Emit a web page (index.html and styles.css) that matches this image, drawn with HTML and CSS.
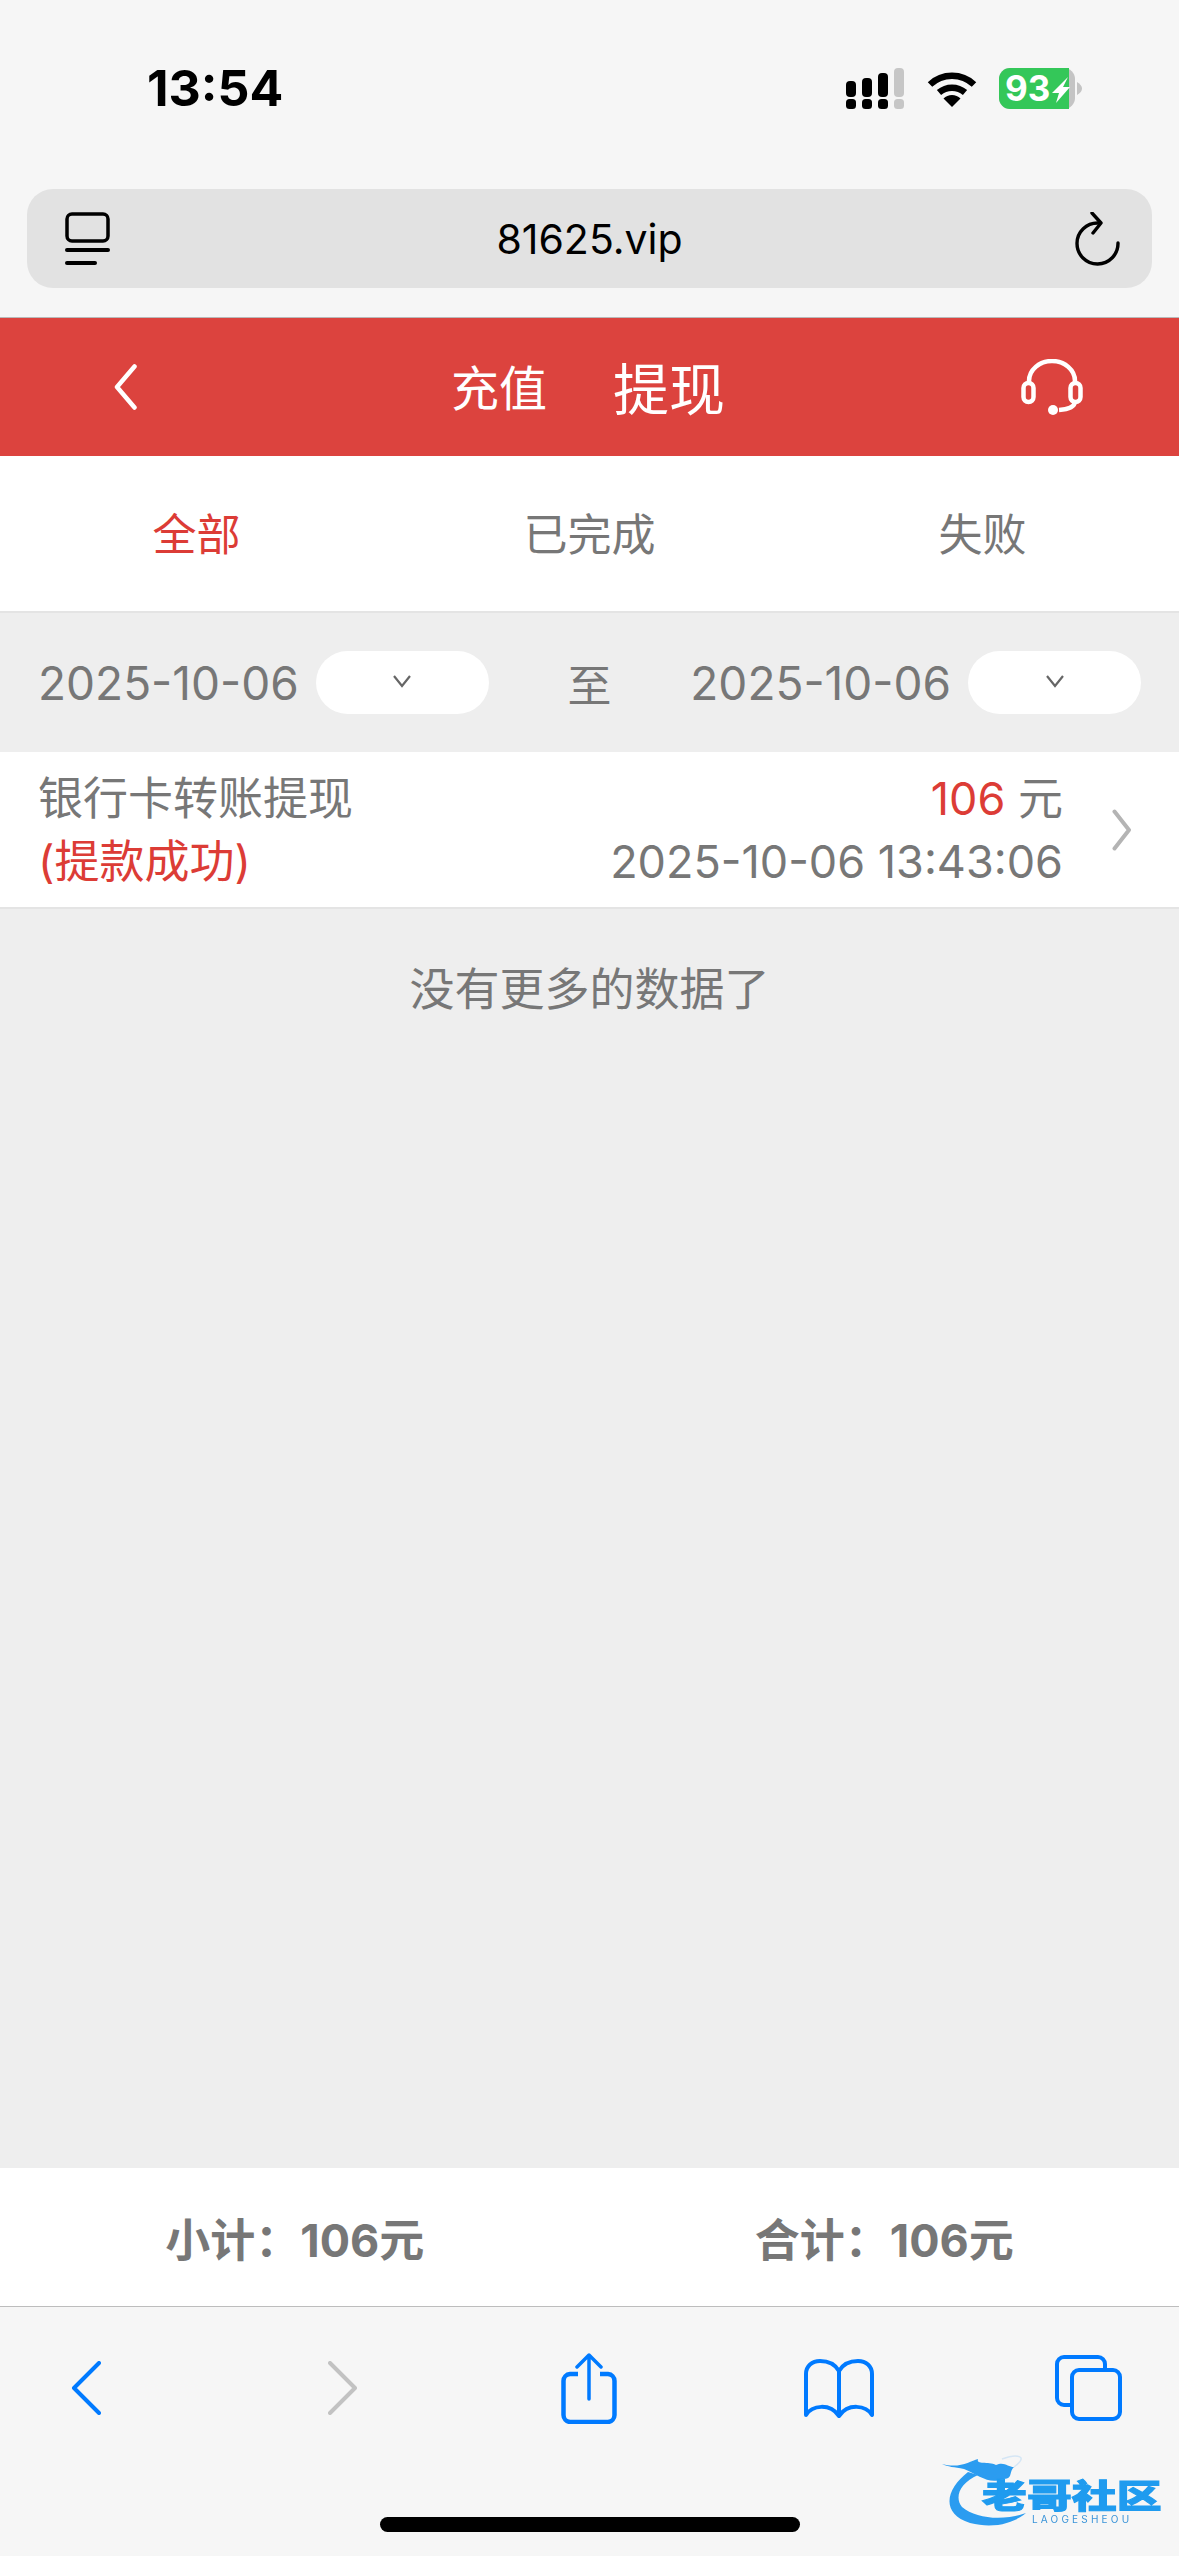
FILE: index.html
```html
<!DOCTYPE html>
<html lang="zh-CN">
<head>
    <meta charset="UTF-8">
    <meta name="viewport" content="width=device-width, initial-scale=1.0">
    <title>提现记录</title>
    <link rel="stylesheet" href="styles.css">
</head>
<body>
    <!-- 浏览器顶部 -->
    <header class="browser-top">
        <div class="status-bar">
            <span class="clock">13:54</span>
            <div class="status-icons">
                <svg class="ico-signal" viewBox="0 0 58 41">
                    <rect x="0" y="13" width="10" height="16" rx="4" fill="#000"/>
                    <rect x="16" y="10" width="10" height="19" rx="4" fill="#000"/>
                    <rect x="32" y="5" width="10" height="24" rx="4" fill="#000"/>
                    <rect x="48" y="0" width="10" height="29" rx="4" fill="#c6c6c6"/>
                    <rect x="0" y="31" width="10" height="10" rx="3.5" fill="#000"/>
                    <rect x="16" y="31" width="10" height="10" rx="3.5" fill="#000"/>
                    <rect x="32" y="31" width="10" height="10" rx="3.5" fill="#000"/>
                    <rect x="48" y="31" width="10" height="10" rx="3.5" fill="#c6c6c6"/>
                </svg>
                <svg class="ico-wifi" viewBox="0 0 50 37">
                    <path d="M3 14.5 A32 32 0 0 1 47 14.5" fill="none" stroke="#000" stroke-width="6.5"/>
                    <path d="M12 22.5 A20 20 0 0 1 38 22.5" fill="none" stroke="#000" stroke-width="6.5"/>
                    <path d="M25 37 L16.5 28.5 A12 12 0 0 1 33.5 28.5 Z" fill="#000"/>
                </svg>
                <svg class="ico-battery" viewBox="0 0 83 41">
                    <rect x="0" y="0" width="76" height="41" rx="11" fill="#c4c4c4"/>
                    <path d="M11 0 H70 V41 H11 A11 11 0 0 1 0 30 V11 A11 11 0 0 1 11 0 Z" fill="#34c759"/>
                    <path d="M78 14 Q83 17 83 20.5 Q83 24 78 27 Z" fill="#c4c4c4"/>
                    <text x="6" y="33" class="battery-num">93</text>
                    <path d="M69 9 L53 25 H60 L57 35 L71 19 H64 Z" fill="#fff"/>
                </svg>
            </div>
        </div>
        <div class="url-bar">
            <svg class="ico-reader" viewBox="0 0 45 54">
                <rect x="2" y="2" width="41" height="27" rx="5" fill="none" stroke="#000" stroke-width="3.5"/>
                <rect x="0" y="36" width="45" height="4" rx="2" fill="#000"/>
                <rect x="0" y="49" width="32" height="4" rx="2" fill="#000"/>
            </svg>
            <span class="url-text">81625.vip</span>
            <svg class="ico-reload" viewBox="0 0 45 54">
                <path d="M23 11 A20.5 20.5 0 1 0 43 31" fill="none" stroke="#000" stroke-width="3.4" stroke-linecap="round"/>
                <path d="M17 1 L26 11 L18 21" fill="none" stroke="#000" stroke-width="3.4" stroke-linecap="round" stroke-linejoin="round"/>
            </svg>
        </div>
    </header>

    <!-- 红色导航 -->
    <nav class="title-bar">
        <svg class="ico-back" viewBox="0 0 23 46">
            <path d="M20.5 2.5 L3 23 L20.5 43.5" fill="none" stroke="#fff" stroke-width="4.5" stroke-linecap="round" stroke-linejoin="round"/>
        </svg>
        <div class="title-switch">
            <span class="title-off">充值</span>
            <span class="title-on">提现</span>
        </div>
        <svg class="ico-service" viewBox="0 0 62 57">
            <path d="M8 24 V22 A23 20 0 0 1 54 22 V24" fill="none" stroke="#fff" stroke-width="4.5"/>
            <rect x="2.5" y="24" width="10" height="19" rx="5" fill="none" stroke="#fff" stroke-width="4.5"/>
            <rect x="49.5" y="24" width="10" height="19" rx="5" fill="none" stroke="#fff" stroke-width="4.5"/>
            <path d="M54 43 Q53 50 38 51" fill="none" stroke="#fff" stroke-width="4.5"/>
            <circle cx="32" cy="51" r="5" fill="#fff"/>
        </svg>
    </nav>

    <!-- 状态筛选 -->
    <div class="tabs">
        <div class="tab tab-active">全部</div>
        <div class="tab">已完成</div>
        <div class="tab">失败</div>
    </div>

    <main class="content">
        <div class="date-filter">
            <div class="date-group">
                <span class="date-text">2025-10-06</span>
                <div class="date-pill"><svg class="ico-caret" viewBox="0 0 20 14"><path d="M2 2 L10 12 L18 2" fill="none" stroke="#666" stroke-width="2.2"/></svg></div>
            </div>
            <span class="date-to">至</span>
            <div class="date-group">
                <span class="date-text">2025-10-06</span>
                <div class="date-pill"><svg class="ico-caret" viewBox="0 0 20 14"><path d="M2 2 L10 12 L18 2" fill="none" stroke="#666" stroke-width="2.2"/></svg></div>
            </div>
        </div>

        <div class="record">
            <div class="record-left">
                <div>银行卡转账提现</div>
                <div class="red">(提款成功)</div>
            </div>
            <div class="record-right">
                <div><span class="red">106</span> 元</div>
                <div>2025-10-06 13:43:06</div>
            </div>
            <svg class="ico-more" viewBox="0 0 20 42">
                <path d="M2.5 2.5 L17 21 L2.5 39.5" fill="none" stroke="#b4b4b4" stroke-width="4" stroke-linecap="round" stroke-linejoin="round"/>
            </svg>
        </div>

        <p class="no-more">没有更多的数据了</p>
    </main>

    <div class="totals">
        <div class="total">小计：106元</div>
        <div class="total">合计：106元</div>
    </div>

    <!-- 浏览器底部 -->
    <footer class="browser-bottom">
        <div class="toolbar">
            <svg class="ico-nav" viewBox="0 0 30 54"><path d="M28 2 L3 27 L28 52" fill="none" stroke="#007aff" stroke-width="4" stroke-linecap="round" stroke-linejoin="round"/></svg>
            <svg class="ico-nav" viewBox="0 0 30 54"><path d="M2 2 L27 27 L2 52" fill="none" stroke="#c2c2c2" stroke-width="4" stroke-linecap="round" stroke-linejoin="round"/></svg>
            <svg class="ico-share" viewBox="0 0 56 71">
                <path d="M17 21 H9 A7 7 0 0 0 2.5 28 V62 A7 7 0 0 0 9 69 H47 A7 7 0 0 0 53.5 62 V28 A7 7 0 0 0 47 21 H39" fill="none" stroke="#007aff" stroke-width="4.5"/>
                <path d="M28 46 V2 M16 14 L28 2 L40 14" fill="none" stroke="#007aff" stroke-width="3.5" stroke-linecap="round" stroke-linejoin="round"/>
            </svg>
            <svg class="ico-book" viewBox="0 0 70 59">
                <path d="M35 12 C31 5 24 2 16 2 C8 2 2 7 2 15 V56 C8 46 26 44 35 57 C44 44 62 46 68 56 V15 C68 7 62 2 54 2 C46 2 39 5 35 12 Z M35 12 V57" fill="none" stroke="#007aff" stroke-width="4" stroke-linejoin="round"/>
            </svg>
            <svg class="ico-tabs" viewBox="0 0 67 66">
                <path d="M50 13 V9 A7 7 0 0 0 43 2 H9 A7 7 0 0 0 2 9 V43 A7 7 0 0 0 9 50 H15" fill="none" stroke="#007aff" stroke-width="4"/>
                <rect x="17" y="15" width="48" height="49" rx="7" fill="none" stroke="#007aff" stroke-width="4"/>
            </svg>
        </div>
        <div class="home-bar"></div>

        <!-- 水印 -->
        <div class="watermark">
            <svg class="wm-dragon" viewBox="0 0 110 73">
                <path d="M26 17 C4 34 -2 58 28 68 C52 74 72 68 84 58 C62 66 34 64 20 52 C12 42 18 28 36 20 Z" fill="#2b9cf0"/>
                <path d="M0 9 C18 14 28 6 36 4 C34 10 46 6 54 10 C62 6 66 12 72 12 C66 18 72 24 60 24 C48 30 36 20 22 14 C12 12 6 12 0 9 Z" fill="#2b9cf0"/>
                <path d="M60 4 C74 -1 88 0 72 12" fill="none" stroke="#d5e6f5" stroke-width="1.5"/>
            </svg>
            <span class="wm-name">老哥社区</span>
            <span class="wm-sub">LAOGESHEOU</span>
        </div>
    </footer>
</body>
</html>
```

FILE: styles.css
```css
* {
    box-sizing: border-box;
}
html, body {
    margin: 0;
    padding: 0;
}
body {
    width: 1179px;
    height: 2556px;
    display: flex;
    flex-direction: column;
    background-color: #eeeeee;
    color: #777;
    font-family: Inter, "Noto Sans CJK SC", sans-serif;
    font-size: 45px;
    overflow: hidden;
}

/* 浏览器顶部 */
.browser-top {
    height: 318px;
    background-color: #f6f6f6;
    border-bottom: 1px solid #b9b9b9;
}
.status-bar {
    height: 176px;
    padding: 0 97px 0 147px;
    display: flex;
    align-items: center;
    justify-content: space-between;
}
.clock {
    color: #000;
    font-family: Inter, sans-serif;
    font-size: 50px;
    font-weight: 700;
}
.status-icons {
    display: flex;
    align-items: center;
}
.ico-signal {
    width: 58px;
    height: 41px;
}
.ico-wifi {
    width: 50px;
    height: 37px;
    margin-left: 23px;
}
.ico-battery {
    width: 83px;
    height: 41px;
    margin-left: 22px;
}
.battery-num {
    fill: #fff;
    font-family: Inter, sans-serif;
    font-size: 35px;
    font-weight: 700;
}
.url-bar {
    height: 99px;
    margin: 13px 27px 0;
    padding: 0 32px 0 38px;
    background-color: #e2e2e2;
    border-radius: 26px;
    display: flex;
    align-items: center;
    justify-content: space-between;
}
.ico-reader, .ico-reload {
    width: 45px;
    height: 54px;
}
.url-text {
    margin-right: 6px;
    color: #000;
    font-size: 41px;
}

/* 红色导航 */
.title-bar {
    height: 138px;
    padding: 0 96px 0 114px;
    background-color: #dc433e;
    display: flex;
    align-items: center;
    justify-content: space-between;
    color: #fff;
}
.ico-back {
    width: 23px;
    height: 46px;
}
.ico-service {
    width: 62px;
    height: 57px;
}
.title-switch {
    margin: 0 0 4px 18px;
    display: flex;
    align-items: center;
    gap: 66px;
}
.title-off {
    font-size: 48px;
}
.title-on {
    font-size: 56px;
}

/* 状态筛选 */
.tabs {
    height: 157px;
    background-color: #fff;
    border-bottom: 2px solid #e4e4e4;
    display: grid;
    grid-template-columns: repeat(3, 1fr);
    align-items: center;
    padding-bottom: 4px;
    font-size: 44px;
}
.tab {
    text-align: center;
}
.tab-active {
    color: #dc3c36;
}

.content {
    flex: 1;
}
.date-filter {
    height: 139px;
    padding: 0 38px;
    display: flex;
    align-items: center;
    justify-content: space-between;
}
.date-group {
    display: flex;
    align-items: center;
    gap: 17px;
}
.date-text {
    font-size: 46px;
}
.date-to {
    margin: 0 6px;
    font-size: 44px;
}
.date-pill {
    width: 173px;
    height: 63px;
    background-color: #fff;
    border-radius: 32px;
    display: flex;
    align-items: center;
    justify-content: center;
}
.ico-caret {
    width: 20px;
    height: 14px;
    margin-bottom: 4px;
}
.record {
    height: 157px;
    padding: 0 47px 0 38px;
    background-color: #fff;
    border-bottom: 2px solid #e4e4e4;
    display: flex;
    align-items: center;
    line-height: 63px;
}
.record-left {
    flex: 1;
}
.record-right {
    text-align: right;
}
.red {
    color: #dc3c36;
}
.ico-more {
    width: 20px;
    height: 42px;
    margin-left: 49px;
}
.no-more {
    margin: 45px 0 0;
    text-align: center;
}

/* 合计 */
.totals {
    height: 138px;
    background-color: #fff;
    display: grid;
    grid-template-columns: 1fr 1fr;
    align-items: center;
}
.total {
    text-align: center;
    font-weight: 700;
}

/* 浏览器底部 */
.browser-bottom {
    position: relative;
    height: 250px;
    background-color: #f6f6f6;
    border-top: 1px solid #bdbdbd;
}
.toolbar {
    height: 210px;
    padding-bottom: 48px;
    display: grid;
    grid-template-columns: 172px 342px 150px 350px 148px;
    align-items: center;
    justify-items: center;
}
.ico-nav {
    width: 30px;
    height: 54px;
}
.ico-share {
    width: 56px;
    height: 71px;
}
.ico-book {
    width: 70px;
    height: 59px;
}
.ico-tabs {
    width: 67px;
    height: 66px;
}
.home-bar {
    width: 420px;
    height: 15px;
    margin: 0 auto;
    background-color: #000;
    border-radius: 8px;
}

/* 水印 */
.watermark {
    position: absolute;
    left: 942px;
    top: 148px;
    width: 222px;
    height: 74px;
    filter: blur(0.7px);
}
.wm-dragon {
    position: absolute;
    left: 0;
    top: 0;
    width: 110px;
    height: 73px;
}
.wm-name {
    position: absolute;
    left: 40px;
    top: 21px;
    font-size: 33px;
    font-weight: 900;
    line-height: 40px;
    white-space: nowrap;
    color: #1f9bef;
    -webkit-text-stroke: 1px #1f9bef;
    transform: scaleX(1.36);
    transform-origin: left center;
}
.wm-sub {
    position: absolute;
    left: 90px;
    top: 58px;
    font-size: 10px;
    letter-spacing: 3.2px;
    color: #3a94d8;
}
```
